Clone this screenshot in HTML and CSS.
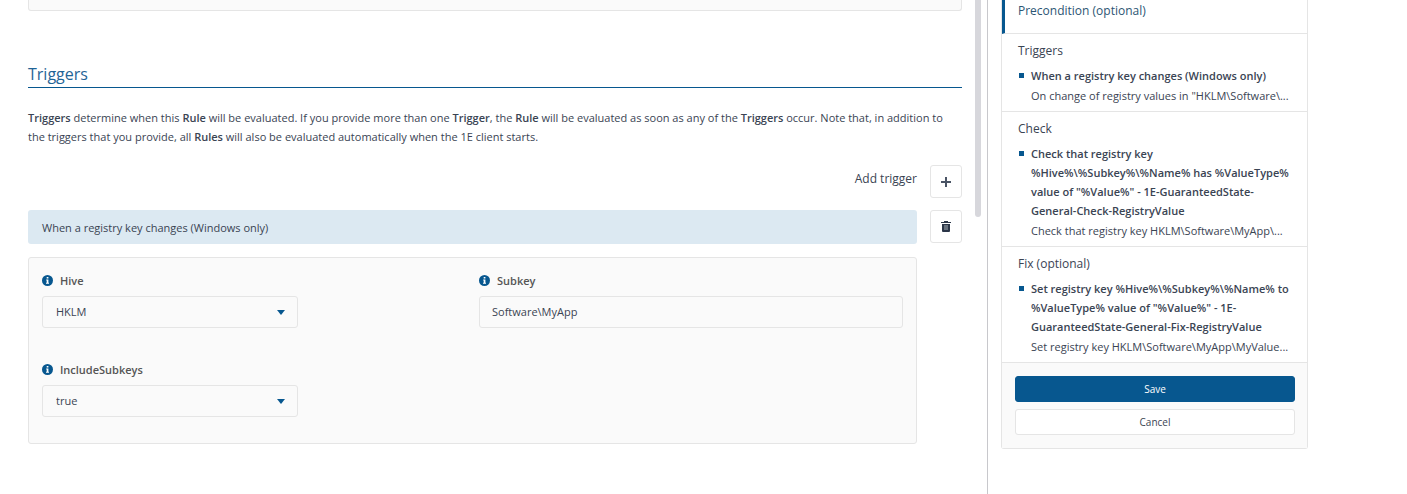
FILE: index.html
```
<!DOCTYPE html>
<html lang="en">

<head>
    <meta charset="UTF-8" />
    <meta name="viewport" content="width=device-width, initial-scale=1" />
    <title>Edit Rule - Triggers</title>
    <link rel="stylesheet" href="styles.css">
</head>

<body>

    <div class="page">

        <!-- Rule editor -->
        <main class="editor">
            <div class="editor-content">
                <div class="previous-panel"></div>

                <h2 class="section-title">Triggers</h2>
                <p class="intro">
                    <b>Triggers</b> determine when this <b>Rule</b> will be evaluated. If you provide more than one
                    <b>Trigger</b>, the <b>Rule</b> will be evaluated as soon as any of the <b>Triggers</b> occur. Note
                    that, in addition to the triggers that you provide, all <b>Rules</b> will also be evaluated
                    automatically when the 1E client starts.
                </p>

                <div class="add-row">
                    <label for="add-trigger">Add trigger</label>
                    <button class="icon-btn" id="add-trigger" type="button">
                        <svg width="10" height="10" viewBox="0 0 10 10">
                            <path d="M5 0v10M0 5h10" stroke="#4a5465" stroke-width="2" />
                        </svg>
                    </button>
                </div>

                <div class="trigger-row">
                    <div class="trigger-name">When a registry key changes (Windows only)</div>
                    <button class="icon-btn" type="button" aria-label="Delete trigger">
                        <svg width="10" height="11" viewBox="0 0 10 11">
                            <path d="M0 1h3V0h4v1h3v1H0z" fill="#2b3648" />
                            <path d="M1 3h8v7q0 1-1 1H2q-1 0-1-1z" fill="#2b3648" />
                            <path d="M3 4h4v5H3z" fill="#69737f" />
                        </svg>
                    </button>
                </div>

                <div class="params">
                    <div class="field">
                        <label for="hive">
                            <svg class="info" viewBox="0 0 11 11"><circle cx="5.5" cy="5.5" r="5.5" /><path d="M4.7 2h1.7v1.5H4.7zM4.2 4.4h2.2v3.3H7v1H4v-1h.7V5.4h-.5z" /></svg>
                            Hive
                        </label>
                        <div class="select">
                            <select id="hive">
                                <option>HKLM</option>
                            </select>
                        </div>
                    </div>
                    <div class="field">
                        <label for="subkey">
                            <svg class="info" viewBox="0 0 11 11"><circle cx="5.5" cy="5.5" r="5.5" /><path d="M4.7 2h1.7v1.5H4.7zM4.2 4.4h2.2v3.3H7v1H4v-1h.7V5.4h-.5z" /></svg>
                            Subkey
                        </label>
                        <input id="subkey" type="text" value="Software\MyApp">
                    </div>
                    <div class="field">
                        <label for="include-subkeys">
                            <svg class="info" viewBox="0 0 11 11"><circle cx="5.5" cy="5.5" r="5.5" /><path d="M4.7 2h1.7v1.5H4.7zM4.2 4.4h2.2v3.3H7v1H4v-1h.7V5.4h-.5z" /></svg>
                            IncludeSubkeys
                        </label>
                        <div class="select">
                            <select id="include-subkeys">
                                <option>true</option>
                            </select>
                        </div>
                    </div>
                </div>
            </div>
            <div class="scroll-thumb"></div>
        </main>

        <!-- Summary -->
        <aside class="summary">
            <section class="step active">
                <h3>Precondition (optional)</h3>
            </section>
            <section class="step">
                <h3>Triggers</h3>
                <ul>
                    <li>
                        <div class="name">When a registry key changes (Windows only)</div>
                        <div class="desc">On change of registry values in "HKLM\Software\...</div>
                    </li>
                </ul>
            </section>
            <section class="step">
                <h3>Check</h3>
                <ul>
                    <li>
                        <div class="name">Check that registry key %Hive%\%Subkey%\%Name% has %ValueType% value of "%Value%" - 1E-GuaranteedState-General-Check-RegistryValue</div>
                        <div class="desc">Check that registry key HKLM\Software\MyApp\...</div>
                    </li>
                </ul>
            </section>
            <section class="step">
                <h3>Fix (optional)</h3>
                <ul>
                    <li>
                        <div class="name">Set registry key %Hive%\%Subkey%\%Name% to %ValueType% value of "%Value%" - 1E-GuaranteedState-General-Fix-RegistryValue</div>
                        <div class="desc">Set registry key HKLM\Software\MyApp\MyValue...</div>
                    </li>
                </ul>
            </section>
            <div class="actions">
                <button class="btn save" type="button">Save</button>
                <button class="btn cancel" type="button">Cancel</button>
            </div>
        </aside>

    </div>

</body>

</html>
```

FILE: styles.css
```
* {
    box-sizing: border-box;
}

body {
    font-family: "Open Sans", sans-serif;
    font-size: 11px;
    line-height: 19px;
    color: #3a4453;
    background-color: #fff;
    margin: 0;
}

button,
input,
select {
    font: inherit;
    color: inherit;
}

b {
    font-weight: 600;
}

.page {
    display: flex;
    align-items: flex-start;
    min-height: 100vh;
    padding-right: 99px;
}

/* Rule editor */
.editor {
    display: flex;
    align-items: flex-start;
    flex: 1;
    min-width: 0;
    min-height: 100vh;
    padding: 0 6px 0 28px;
    border-right: 1px solid #c8c8cc;
}

.editor-content {
    flex: 1;
    min-width: 0;
    padding-bottom: 50px;
}

.previous-panel {
    height: 11px;
    background-color: #fafafa;
    border: 1px solid #e5e5e5;
    border-top: none;
    border-radius: 0 0 3px 3px;
}

.scroll-thumb {
    width: 6px;
    height: 44vh;
    margin-left: 13px;
    background-color: #d7d7dc;
    border-radius: 0 0 3px 3px;
}

.section-title {
    font-size: 16px;
    font-weight: 400;
    line-height: 24px;
    color: #1f6496;
    margin: 51px 0 20px;
    padding-bottom: 1px;
    border-bottom: 1px solid #07578f;
}

.intro {
    margin: 0 0 19px;
}

.add-row,
.trigger-row {
    display: flex;
    gap: 13px;
    margin-bottom: 13px;
}

.add-row {
    justify-content: flex-end;
    margin-bottom: 12px;
}

.add-row label {
    font-size: 12px;
    padding-top: 4px;
}

.icon-btn {
    display: flex;
    align-items: center;
    justify-content: center;
    width: 32px;
    height: 33px;
    padding: 0;
    background-color: #fff;
    border: 1px solid #e5e5e5;
    border-radius: 3px;
    cursor: pointer;
}

.trigger-name {
    flex: 1;
    height: 34px;
    padding: 8px 14px;
    background-color: #dce9f2;
    border-radius: 3px;
}

.params {
    display: grid;
    grid-template-columns: 1fr 1fr;
    gap: 31px 13px;
    margin-right: 45px;
    padding: 12px 13px 26px;
    background-color: #fafafa;
    border: 1px solid #e5e5e5;
    border-radius: 3px;
}

.field label {
    display: flex;
    align-items: center;
    gap: 7px;
    height: 20px;
    margin-bottom: 6px;
    font-weight: 600;
    color: #555;
}

.info {
    width: 11px;
    height: 11px;
}

.info circle {
    fill: #07578f;
}

.info path {
    fill: #fff;
}

.select {
    position: relative;
    width: 256px;
}

.select::after {
    content: "";
    position: absolute;
    top: 14px;
    right: 13px;
    border: 4px solid transparent;
    border-top: 5px solid #07578f;
    border-bottom: none;
    pointer-events: none;
}

.field select,
.field input {
    display: block;
    appearance: none;
    width: 100%;
    height: 32px;
    padding: 0 13px 1px;
    background-color: #fafafa;
    border: 1px solid #e5e5e5;
    border-radius: 3px;
}

.field input {
    padding: 0 12px 1px;
}

/* Summary */
.summary {
    width: 307px;
    margin-left: 13px;
    border: 1px solid #e5e5e5;
    border-top: none;
    border-radius: 0 0 3px 3px;
}

.step {
    padding: 7px 13px 5px 16px;
    border-bottom: 1px solid #e5e5e5;
}

.step h3 {
    font-size: 12px;
    font-weight: 400;
    line-height: 20px;
    margin: 0;
}

.step.active {
    padding: 1px 13px 12px;
    border-left: 3px solid #07578f;
}

.step.active h3 {
    color: #2c5573;
}

.step ul {
    list-style: none;
    margin: 5px 0 0;
    padding: 0;
}

.step li {
    position: relative;
    padding-left: 13px;
}

.step li::before {
    content: "";
    position: absolute;
    top: 7px;
    left: 1px;
    width: 5px;
    height: 5px;
    background-color: #07578f;
}

.name {
    font-weight: 600;
    margin-bottom: 1px;
}

.desc {
    line-height: 20px;
    white-space: nowrap;
}

.actions {
    display: flex;
    flex-direction: column;
    gap: 7px;
    padding: 13px 12px 13px 13px;
    background-color: #fafafa;
}

.btn {
    height: 26px;
    padding: 0;
    font-size: 10px;
    border: 1px solid #e5e5e5;
    border-radius: 3px;
    background-color: #fff;
    cursor: pointer;
}

.btn.save {
    color: #fff;
    background-color: #07578f;
    border-color: #07578f;
}
```
